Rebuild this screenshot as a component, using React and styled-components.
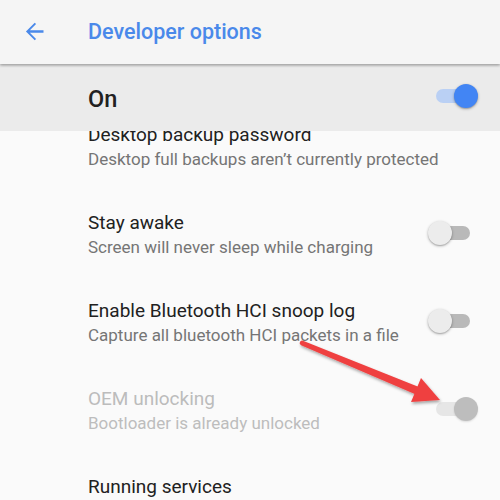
import React from "react";
import styled, { createGlobalStyle } from "styled-components";

const Global = createGlobalStyle`
  html, body {
    margin: 0;
    padding: 0;
    background: #fafafa;
  }
  body {
    font-family: Roboto, "Noto Sans", "Liberation Sans", sans-serif;
    -webkit-font-smoothing: antialiased;
  }
`;

const Page = styled.div`
  position: relative;
  width: 500px;
  height: 500px;
  overflow: hidden;
  display: flex;
  flex-direction: column;
  background: #fafafa;
`;

const AppBar = styled.header`
  position: relative;
  z-index: 2;
  flex: none;
  height: 64px;
  display: flex;
  align-items: center;
  padding-left: 21px;
  background: #f5f5f5;
  box-shadow: 0 1px 3px rgba(0, 0, 0, 0.28), 0 2px 2px rgba(0, 0, 0, 0.1);
`;

const BackButton = styled.div`
  width: 27px;
  height: 27px;
  margin-top: -2px;
  display: flex;
`;

const Title = styled.h1`
  margin: 0 0 0 40px;
  font-size: 21.5px;
  font-weight: 500;
  color: #4a89ea;
  line-height: 24px;
`;

const MasterBar = styled.div`
  position: relative;
  z-index: 1;
  flex: none;
  height: 67px;
  display: flex;
  align-items: center;
  justify-content: space-between;
  padding: 0 22px 0 88px;
  background: #ebebeb;
`;

const MasterLabel = styled.span`
  font-size: 23.5px;
  font-weight: 500;
  color: #212121;
  margin-top: 2px;
`;

const List = styled.div`
  flex: 1;
  overflow: hidden;
`;

const ListInner = styled.div`
  margin-top: -28px;
`;

const Row = styled.div`
  height: 88px;
  box-sizing: border-box;
  display: flex;
  align-items: center;
  padding: 0 22px 0 88px;
`;

const Texts = styled.div`
  flex: 1;
  min-width: 0;
  display: flex;
  flex-direction: column;
`;

const RowTitle = styled.div`
  font-size: 19px;
  line-height: 24px;
  white-space: nowrap;
  color: ${(p) => (p.disabled ? "#bcbcbc" : "#212121")};
`;

const RowSummary = styled.div`
  font-size: 17px;
  line-height: 24px;
  white-space: nowrap;
  color: ${(p) => (p.disabled ? "#bdbdbd" : "#757575")};
`;

const SwitchBox = styled.div`
  position: relative;
  flex: none;
  width: 50px;
  height: 24px;
  margin-bottom: 4px;
`;

const Track = styled.div`
  position: absolute;
  left: 8px;
  top: 5px;
  width: 34px;
  height: 14px;
  border-radius: 7px;
  background: ${(p) =>
    p.disabled ? "#e6e6e6" : p.checked ? "#bad0f4" : "#b9b9b9"};
`;

const Thumb = styled.div`
  position: absolute;
  top: 0;
  ${(p) => (p.checked ? "right: 0;" : "left: 0;")}
  width: 24px;
  height: 24px;
  border-radius: 50%;
  background: ${(p) =>
    p.disabled ? "#bdbdbd" : p.checked ? "#4285f4" : "#ececec"};
  box-shadow: ${(p) =>
    p.disabled
      ? "0 1px 2px rgba(0,0,0,0.12)"
      : "0 1px 3px rgba(0,0,0,0.3), 0 1px 1px rgba(0,0,0,0.12)"};
`;

const Pointer = styled.svg`
  position: absolute;
  left: 290px;
  top: 330px;
  width: 160px;
  height: 90px;
  overflow: visible;
`;

function Switch({ checked, disabled }) {
  return (
    <SwitchBox>
      <Track checked={checked} disabled={disabled} />
      <Thumb checked={checked} disabled={disabled} />
    </SwitchBox>
  );
}

const items = [
  {
    title: "Desktop backup password",
    summary: "Desktop full backups aren\u2019t currently protected",
  },
  {
    title: "Stay awake",
    summary: "Screen will never sleep while charging",
    toggle: true,
  },
  {
    title: "Enable Bluetooth HCI snoop log",
    summary: "Capture all bluetooth HCI packets in a file",
    toggle: true,
  },
  {
    title: "OEM unlocking",
    summary: "Bootloader is already unlocked",
    toggle: true,
    checked: true,
    disabled: true,
  },
  { title: "Running services", summary: "View and control currently running services" },
];

export default function App() {
  return (
    <Page>
      <Global />
      <AppBar>
        <BackButton>
          <svg viewBox="0 0 24 24" width="27" height="27">
            <path
              fill="#4a89ea"
              d="M20 10.9H7.9l5.5-5.5L12.2 4.2 4.4 12l7.8 7.8 1.2-1.2-5.5-5.5H20z"
            />
          </svg>
        </BackButton>
        <Title>Developer options</Title>
      </AppBar>
      <MasterBar>
        <MasterLabel>On</MasterLabel>
        <Switch checked />
      </MasterBar>
      <List>
        <ListInner>
          {items.map((it) => (
            <Row key={it.title}>
              <Texts>
                <RowTitle disabled={it.disabled}>{it.title}</RowTitle>
                <RowSummary disabled={it.disabled}>{it.summary}</RowSummary>
              </Texts>
              {it.toggle && <Switch checked={it.checked} disabled={it.disabled} />}
            </Row>
          ))}
        </ListInner>
      </List>
      <Pointer viewBox="0 0 160 90">
        <defs>
          <filter id="arrowShadow" x="-20%" y="-30%" width="140%" height="160%">
            <feDropShadow dx="1" dy="2" stdDeviation="1.5" floodColor="#000" floodOpacity="0.35" />
          </filter>
        </defs>
        <g filter="url(#arrowShadow)" fill="#ef4141">
          <path d="M12.96 10.7 L129.5 57.3 L126.5 64.7 L11.04 15.3 A2.5 2.5 0 0 1 12.96 10.7 Z" />
          <path d="M150 70 L121 72 L131 48 Z" />
        </g>
      </Pointer>
    </Page>
  );
}
